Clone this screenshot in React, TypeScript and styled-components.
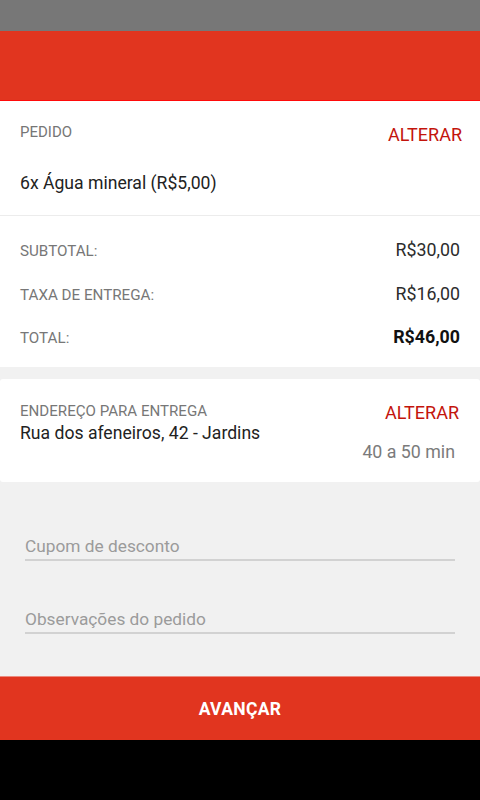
import React from 'react';
import styled, { createGlobalStyle } from 'styled-components';

const GlobalStyle = createGlobalStyle`
  html, body { margin: 0; padding: 0; }
  body { font-family: Roboto, "Liberation Sans", Arial, sans-serif; background: #f1f1f1; }
  * { box-sizing: border-box; }
`;

const Screen = styled.div`
  width: 480px;
  height: 800px;
  display: flex;
  flex-direction: column;
  background: #f1f1f1;
  overflow: hidden;
`;

const StatusBar = styled.div`
  height: 31px;
  background: #777777;
  flex-shrink: 0;
`;

const Header = styled.div`
  height: 70px;
  background: #e1351f;
  border-bottom: 1px solid #ff0a0a;
  flex-shrink: 0;
`;

const OrderCard = styled.section`
  background: #fff;
  padding: 21px 18px 20px 20px;
  border-bottom: 1px solid #ececec;
`;

const Row = styled.div`
  display: flex;
  justify-content: space-between;
  align-items: flex-start;
`;

const Label = styled.div`
  font-size: 15px;
  line-height: 20px;
  color: #767676;
`;

const ChangeLink = styled.button<{ $top?: number }>`
  border: none;
  background: none;
  padding: 0;
  margin-top: ${p => p.$top ?? 0}px;
  font-family: inherit;
  font-size: 18px;
  line-height: 22px;
  color: #c3140c;
  cursor: pointer;
`;

const ItemText = styled.div`
  margin-top: 25px;
  font-size: 17.6px;
  line-height: 24px;
  color: #222;
`;

const Summary = styled.section`
  background: #fff;
  padding: 22px 20px 17px 20px;
  display: flex;
  flex-direction: column;
  gap: 18.7px;
`;

const SumRow = styled.div`
  display: flex;
  justify-content: space-between;
  align-items: baseline;
  line-height: 24px;
`;

const SumLabel = styled.span`
  font-size: 15.2px;
  color: #777;
`;

const SumValue = styled.span<{ $bold?: boolean }>`
  font-size: 17.8px;
  color: ${p => (p.$bold ? '#111' : '#2c2c2c')};
  font-weight: ${p => (p.$bold ? 700 : 400)};
`;

const AddressCard = styled.section`
  margin-top: 11.5px;
  background: #fff;
  border-radius: 3px;
  padding: 23px 21px 19px 20px;
  display: flex;
  justify-content: space-between;
`;

const Column = styled.div<{ $end?: boolean }>`
  display: flex;
  flex-direction: column;
  align-items: ${p => (p.$end ? 'flex-end' : 'flex-start')};
`;

const AddressLabel = styled.div`
  font-size: 15.1px;
  line-height: 18px;
  color: #777;
`;

const AddressText = styled.div`
  margin-top: 2px;
  font-size: 17.6px;
  line-height: 22px;
  color: #222;
`;

const Eta = styled.div`
  margin-top: 17px;
  margin-right: 4px;
  font-size: 17.8px;
  line-height: 22px;
  color: #7b7b7b;
`;

const Form = styled.div`
  flex: 1;
  padding: 53px 25px 0 25px;
  display: flex;
  flex-direction: column;
  gap: 47.5px;
`;

const Field = styled.input`
  width: 100%;
  border: none;
  border-bottom: 2px solid #d2d2d2;
  background: transparent;
  padding: 0 0 2px 0;
  font-family: inherit;
  font-size: 17.3px;
  line-height: 22px;
  height: 26px;
  color: #222;
  outline: none;
  &::placeholder { color: #9b9b9b; }
`;

const NextButton = styled.button`
  height: 64px;
  flex-shrink: 0;
  border: none;
  border-top: 1px solid #ec8a7e;
  background: #e1351f;
  color: #fff;
  font-family: inherit;
  font-size: 17.5px;
  font-weight: 700;
  letter-spacing: 0.3px;
  display: flex;
  align-items: center;
  justify-content: center;
  cursor: pointer;
`;

const NavBar = styled.div`
  height: 60px;
  background: #000;
  flex-shrink: 0;
`;

const totals = [
  { label: 'SUBTOTAL:', value: 'R$30,00' },
  { label: 'TAXA DE ENTREGA:', value: 'R$16,00' },
  { label: 'TOTAL:', value: 'R$46,00', bold: true },
];

export default function App() {
  return (
    <>
      <GlobalStyle />
      <Screen>
        <StatusBar />
        <Header />
        <OrderCard>
          <Row>
            <Label>PEDIDO</Label>
            <ChangeLink $top={2}>ALTERAR</ChangeLink>
          </Row>
          <ItemText>6x Água mineral (R$5,00)</ItemText>
        </OrderCard>
        <Summary>
          {totals.map(t => (
            <SumRow key={t.label}>
              <SumLabel>{t.label}</SumLabel>
              <SumValue $bold={t.bold}>{t.value}</SumValue>
            </SumRow>
          ))}
        </Summary>
        <AddressCard>
          <Column>
            <AddressLabel>ENDEREÇO PARA ENTREGA</AddressLabel>
            <AddressText>Rua dos afeneiros, 42 - Jardins</AddressText>
          </Column>
          <Column $end>
            <ChangeLink>ALTERAR</ChangeLink>
            <Eta>40 a 50 min</Eta>
          </Column>
        </AddressCard>
        <Form>
          <Field placeholder="Cupom de desconto" />
          <Field placeholder="Observações do pedido" />
        </Form>
        <NextButton>AVANÇAR</NextButton>
        <NavBar />
      </Screen>
    </>
  );
}
